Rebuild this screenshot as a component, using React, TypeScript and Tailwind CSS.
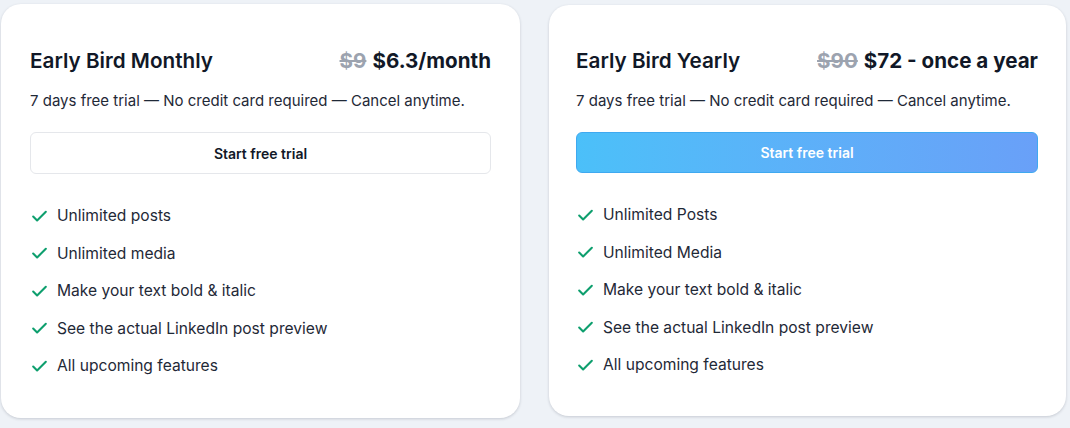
import { Check } from "lucide-react";

interface Plan {
  title: string;
  oldPrice: string;
  price: string;
  features: string[];
  highlighted: boolean;
}

const plans: Plan[] = [
  {
    title: "Early Bird Monthly",
    oldPrice: "$9",
    price: "$6.3/month",
    features: [
      "Unlimited posts",
      "Unlimited media",
      "Make your text bold & italic",
      "See the actual LinkedIn post preview",
      "All upcoming features",
    ],
    highlighted: false,
  },
  {
    title: "Early Bird Yearly",
    oldPrice: "$90",
    price: "$72 - once a year",
    features: [
      "Unlimited Posts",
      "Unlimited Media",
      "Make your text bold & italic",
      "See the actual LinkedIn post preview",
      "All upcoming features",
    ],
    highlighted: true,
  },
];

function PlanCard({ plan }: { plan: Plan }) {
  return (
    <div
      className={
        plan.highlighted
          ? "w-[517px] h-[411px] mt-[1px] bg-white rounded-[20px] shadow-[0_1px_3px_rgba(15,23,42,0.18)] pl-[27px] pr-[28px] pt-[42px]"
          : "w-[519px] h-[414px] bg-white rounded-[20px] shadow-[0_1px_3px_rgba(15,23,42,0.18)] px-[29px] pt-[43px]"
      }
    >
      <div className="flex items-center justify-between h-[28px]">
        <h3 className="text-[20.7px] font-semibold text-[#111827]">{plan.title}</h3>
        <div className="text-[20.6px] font-bold text-[#111827]">
          <span className="line-through text-[#9ca3af] mr-[6px]">{plan.oldPrice}</span>
          {plan.price}
        </div>
      </div>
      <p className="mt-[14px] text-[15px] leading-[24px] text-[#1f2937]">
        7 days free trial — No credit card required — Cancel anytime.
      </p>
      <button
        className={
          plan.highlighted
            ? "mt-[19px] w-full h-[41px] rounded-md border border-[#3fa9f0] bg-gradient-to-r from-[#4bc0f9] to-[#69a0f8] text-white text-[14px] font-semibold"
            : "mt-[19px] w-full h-[42px] rounded-md border border-[#e5e7eb] bg-white text-[#111827] text-[14px] font-semibold"
        }
      >
        Start free trial
      </button>
      <ul className="mt-[30px] flex flex-col gap-[13.5px]">
        {plan.features.map((f) => (
          <li key={f} className="flex items-center gap-[8px] h-[24px] text-[15.6px] text-[#1f2937]">
            <Check className="w-[19px] h-[19px] text-[#0e9f6e]" strokeWidth={2.6} />
            <span>{f}</span>
          </li>
        ))}
      </ul>
    </div>
  );
}

export default function App() {
  return (
    <div
      className="w-[1070px] h-[428px] bg-[#eef2f7] flex gap-[29px] pl-[1px] pt-[4px]"
      style={{ fontFamily: "Inter, 'Noto Sans', sans-serif" }}
    >
      {plans.map((p) => (
        <PlanCard key={p.title} plan={p} />
      ))}
    </div>
  );
}
